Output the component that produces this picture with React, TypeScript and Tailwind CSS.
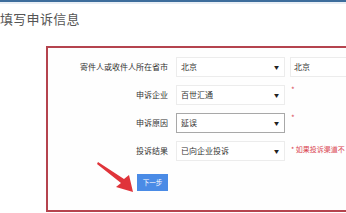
import React from "react";

const font = { fontFamily: '"Noto Sans CJK SC", "Noto Sans", sans-serif' };

function Select({ value, dark }: { value: string; dark?: boolean }) {
  return (
    <div
      className={`w-[109px] h-[20px] flex items-center justify-between pl-[4px] pr-[5px] bg-white border ${
        dark ? "border-[#a8a8a8]" : "border-[#ececec]"
      } text-[8px] text-[#333]`}
    >
      <span>{value}</span>
      <span className="text-[5px] text-[#222]">▼</span>
    </div>
  );
}

function Label({ children }: { children: React.ReactNode }) {
  return (
    <div className="w-[120px] shrink-0 text-right text-[8px] text-[#333]">
      {children}
    </div>
  );
}

export default function App() {
  return (
    <div
      className="relative w-[346px] h-[213px] overflow-hidden bg-white"
      style={font}
    >
      <div className="h-[2px] bg-[#3d6d9c]" />
      <div className="h-[2px] bg-[#e8eef5]" />
      <div className="pt-[7px] pl-0 text-[13px] leading-[16px] text-[#555] tracking-[0.3px]">
        填写申诉信息
      </div>
      <div className="ml-[46px] mt-[19px] w-[320px] h-[166px] border-2 border-[#b5444e] bg-[#fefefe] pt-[9px]">
        <div className="flex flex-col gap-[8px]">
          <div className="flex items-center h-[20px]">
            <Label>寄件人或收件人所在省市</Label>
            <div className="ml-[8px] shrink-0">
              <Select value="北京" />
            </div>
            <div className="ml-[5px] flex-1 h-[20px] border border-[#ececec] bg-white flex items-center pl-[3px] text-[8px] text-[#333]">
              北京
            </div>
          </div>
          <div className="flex items-center h-[20px]">
            <Label>申诉企业</Label>
            <div className="ml-[8px] shrink-0">
              <Select value="百世汇通" />
            </div>
            <div className="ml-[6px] self-start -mt-[1px] text-[8px] text-[#d9535e]">
              *
            </div>
          </div>
          <div className="flex items-center h-[20px]">
            <Label>申诉原因</Label>
            <div className="ml-[8px] shrink-0">
              <Select value="延误" dark />
            </div>
            <div className="ml-[6px] self-start -mt-[1px] text-[8px] text-[#d9535e]">
              *
            </div>
          </div>
          <div className="flex items-center h-[20px]">
            <Label>投诉结果</Label>
            <div className="ml-[8px] shrink-0">
              <Select value="已向企业投诉" />
            </div>
            <div className="ml-[6px] -mt-[4px] whitespace-nowrap text-[7px] text-[#d9434f]">
              * 如果投诉渠道不
            </div>
          </div>
        </div>
        <div className="flex mt-[13px]">
          <div className="w-[120px] flex justify-end">
            <button className="w-[31px] h-[17px] bg-[#4a8be6] text-white text-[6.5px] flex items-center justify-center">
              下一步
            </button>
          </div>
        </div>
      </div>
      <svg
        className="absolute left-0 top-0"
        width="346"
        height="213"
        viewBox="0 0 346 213"
      >
        <path d="M97 164 L98 162 L124 179 L129 175 L133 192 L116 187 L121 183 Z" fill="#e0343a" />
      </svg>
    </div>
  );
}
